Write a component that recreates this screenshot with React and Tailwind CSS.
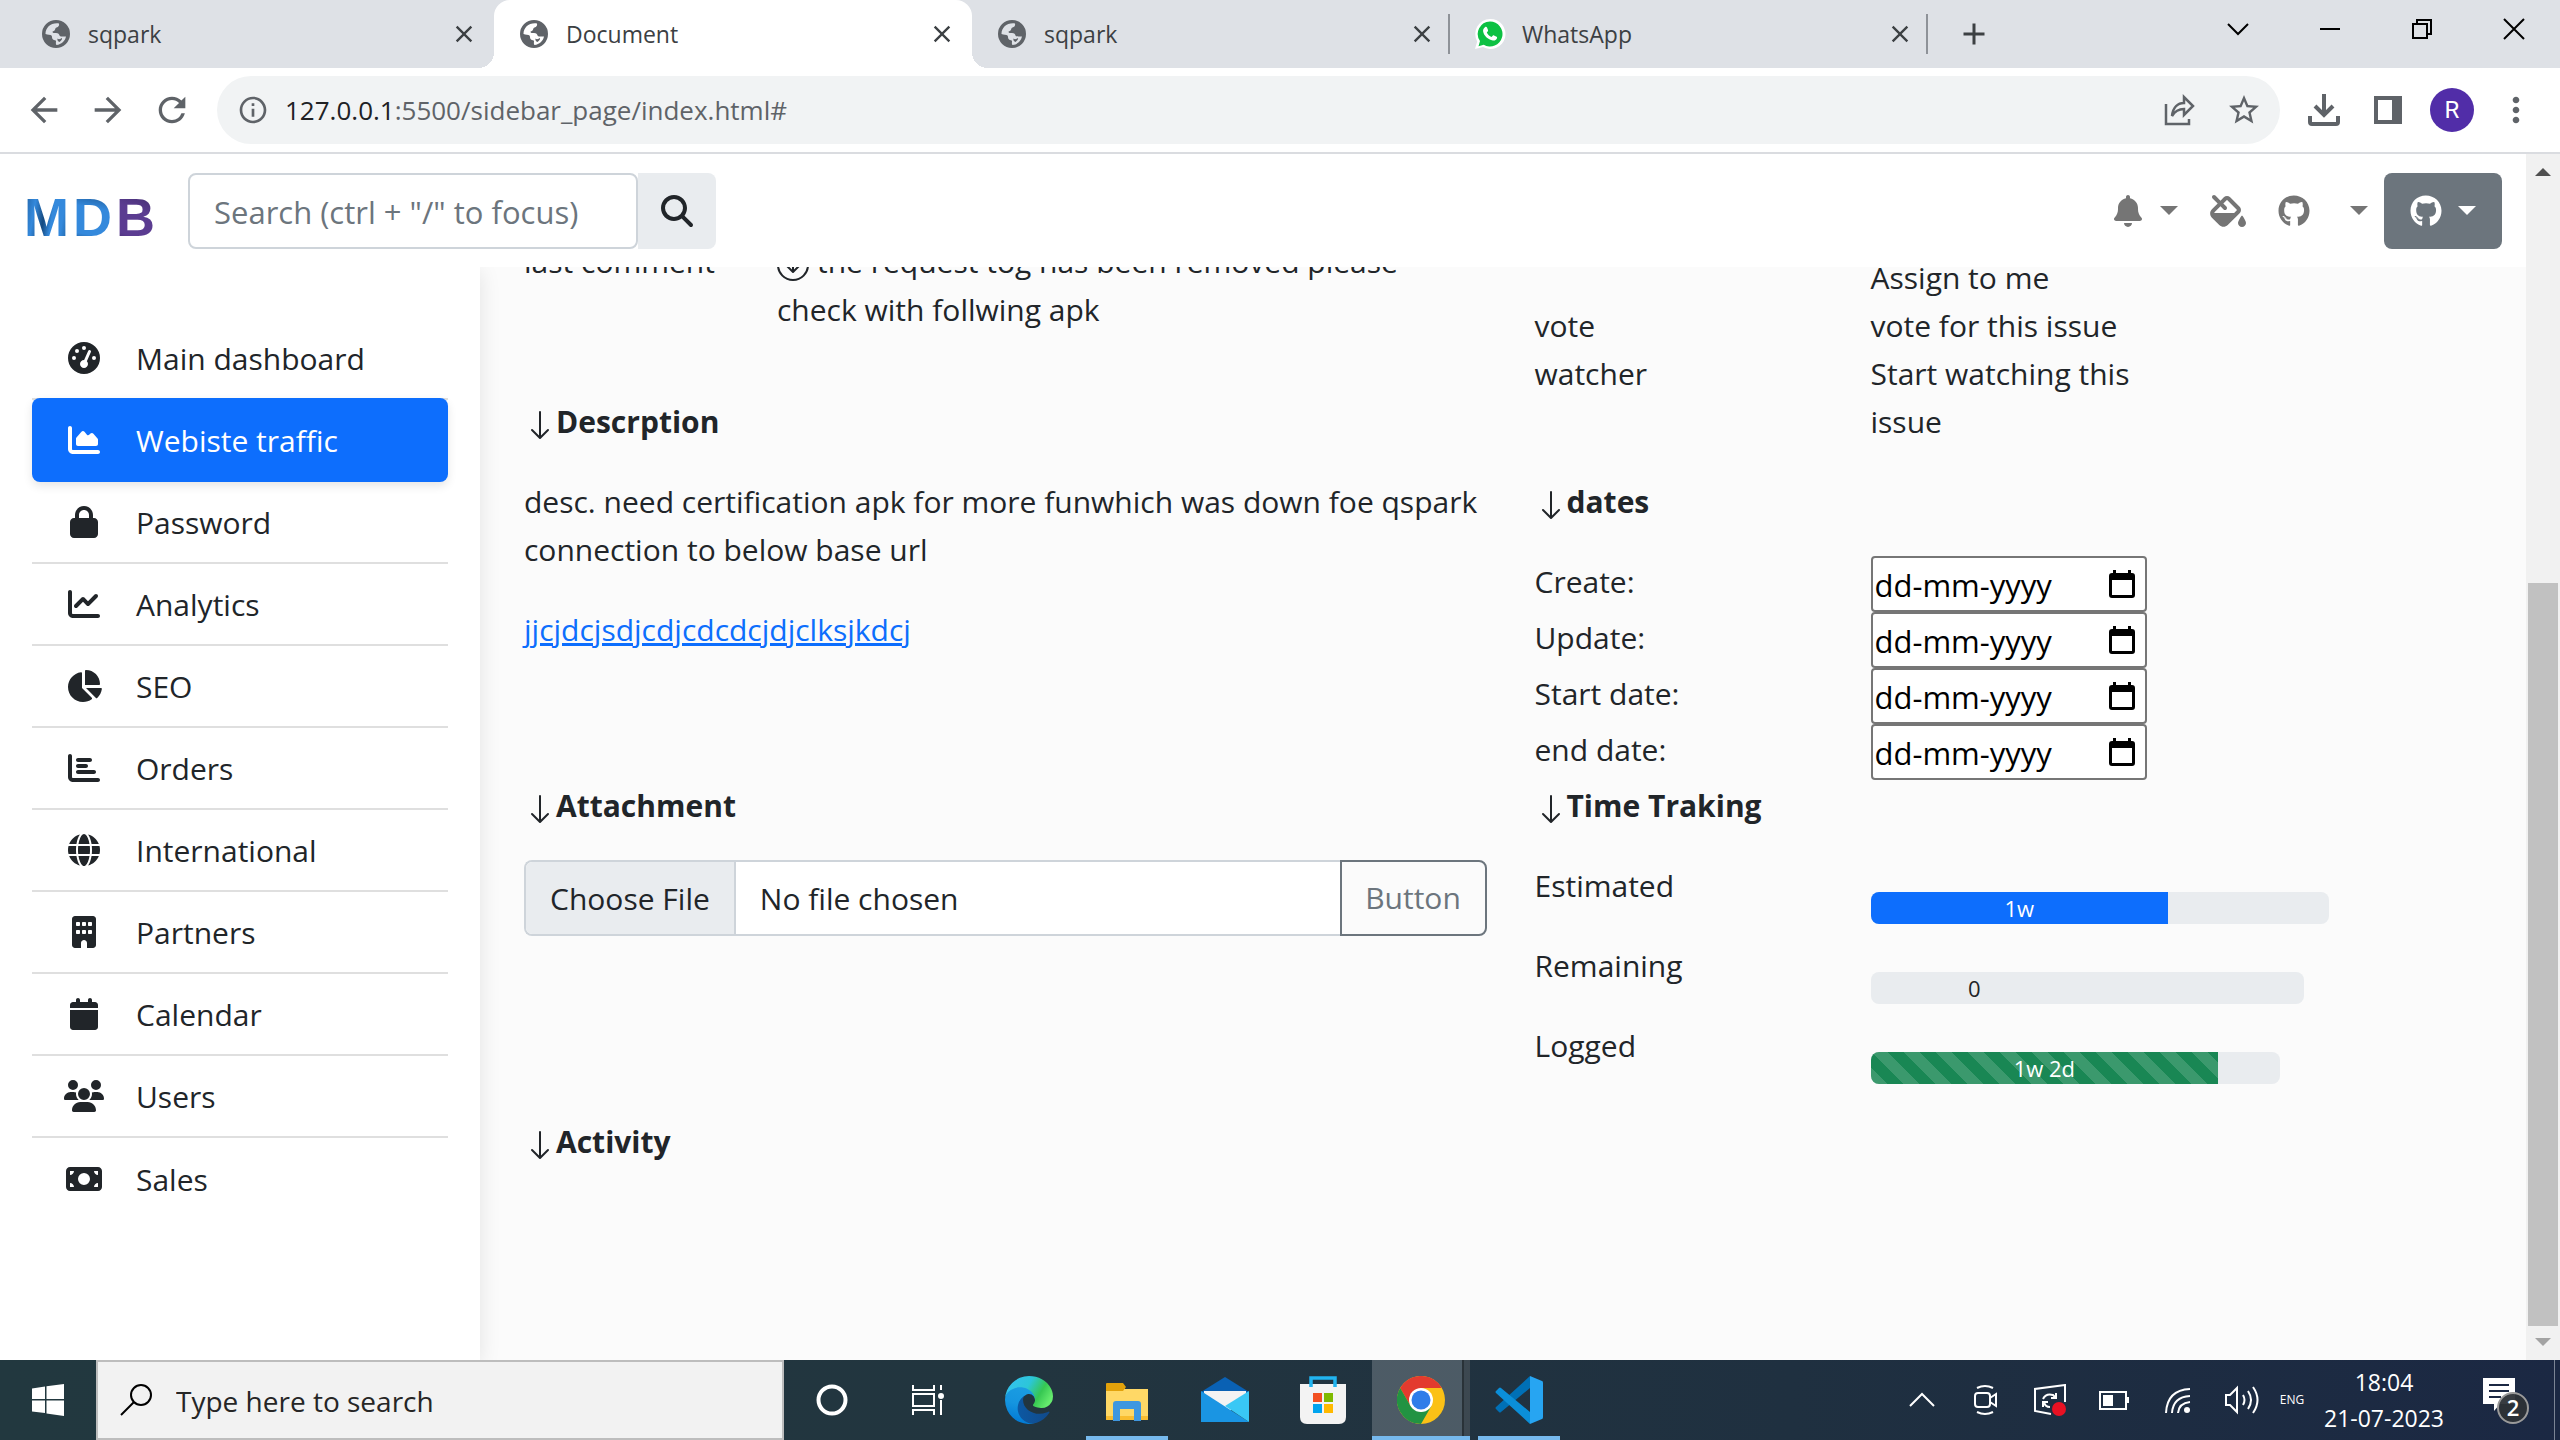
import React from "react";
import {
  FaGaugeHigh, FaChartArea, FaLock, FaChartLine, FaChartPie, FaChartBar, FaGlobe,
  FaBuilding, FaCalendar, FaUsers, FaMoneyBill, FaMagnifyingGlass, FaBell, FaFillDrip, FaGithub,
} from "react-icons/fa6";
import { MdClose, MdAdd, MdArrowBack, MdArrowForward, MdRefresh, MdInfoOutline, MdStarBorder, MdMoreVert } from "react-icons/md";
import { BsArrowDown, BsArrowDownCircle } from "react-icons/bs";

const Caret = () => (
  <svg className="h-[9px] w-[18px]" viewBox="0 0 18 9" fill="currentColor"><path d="M0 0h18L9 9z" /></svg>
);

const Globe = () => (
  <svg className="size-7" viewBox="0 0 28 28" fill="#5f6368">
    <path
      fillRule="evenodd"
      d="M14 0a14 14 0 1 0 0 28 14 14 0 0 0 0-28zM17 3.500c.5 2-.5 3.500-2.500 4-1.500.5-1 2-2 3-.8.700-2 .5-2 1.500s1.500 1 3.500 1c2.500 0 3 1 3.500 2.500.3 1 2 1 4 1h2.500c-1 4.500-4.500 8-9.500 8.500-1-1-.5-2.500-.5-4 0-1-2-.8-3-1.500-1.500-1-.5-3-1.500-4-1-.9-4-.5-6-1.500C3.500 7.500 9 2.500 17 3.500zM15.500 18.500c1.500 1.500 3.500 0 4.500-.500.5 1-1 3-2.500 4-1.500-.5-2.500-2-2-3.500z"
    />
  </svg>
);

const WhatsApp = () => (
  <svg className="size-8" viewBox="0 0 32 32">
    <path d="M16 1a15 15 0 1 1-7 28L1 31l2.2-7.600A15 15 0 0 1 16 1z" fill="#fff" />
    <path d="M16 3.500a12.500 12.500 0 1 1-6.300 23.300L4.500 28.300l1.500-5.200A12.500 12.500 0 0 1 16 3.500z" fill="#0dc143" />
    <path d="M11 9.200c.8-.6 1.600-.4 2 .4l1 2.400c.2.500 0 1-.3 1.400l-.9 1c1 2 2.600 3.500 4.800 4.600l1.300-1.400c.3-.4.700-.4 1.100-.2l2.600 1.300c.6.3.6 1 .3 1.800-.6 1.500-2.400 2.300-4 2-5-1-9.200-5-9.800-9.300-.2-1.700.6-3.100 1.900-4z" fill="#fff" />
  </svg>
);

const TABS = [
  { title: "sqpark" },
  { title: "Document", active: true },
  { title: "sqpark", divider: true },
  { title: "WhatsApp", divider: true, whatsapp: true },
];

function TabStrip() {
  return (
    <div className="flex h-[68px] shrink-0 items-stretch justify-between bg-[#dee1e6] text-[#3c4043]">
      <div className="flex items-stretch pl-4">
        {TABS.map((t, i) => (
          <div
            key={i}
            className={
              t.active
                ? "relative flex w-[478px] items-center rounded-t-2xl bg-white pr-4 pl-6 before:absolute before:bottom-0 before:-left-4 before:size-4 before:bg-[radial-gradient(circle_at_0_0,transparent_16px,white_16px)] after:absolute after:-right-4 after:bottom-0 after:size-4 after:bg-[radial-gradient(circle_at_100%_0,transparent_16px,white_16px)]"
                : "flex w-[478px] items-center pr-4 pl-6"
            }
          >
            <span className="flex w-8 justify-center">{t.whatsapp ? <WhatsApp /> : <Globe />}</span>
            <span className="ml-4 flex-1 text-[23px] leading-8">{t.title}</span>
            <button aria-label="Close tab"><MdClose className="size-7" /></button>
            {t.divider && <span className="ml-3 -mr-4 h-10 w-0.5 bg-[#8e9298]" />}
          </div>
        ))}
        <button aria-label="New tab" className="ml-7"><MdAdd className="size-9" /></button>
      </div>
      <div className="flex h-[58px] text-black">
        <button aria-label="Search tabs" className="flex w-[92px] items-center justify-center">
          <svg className="size-6" viewBox="0 0 24 24" fill="none" stroke="currentColor" strokeWidth="2"><path d="M2 7l10 10L22 7" /></svg>
        </button>
        <button aria-label="Minimize" className="flex w-[92px] items-center justify-center">
          <svg className="size-6" viewBox="0 0 24 24" stroke="currentColor" strokeWidth="2"><path d="M2 12h20" /></svg>
        </button>
        <button aria-label="Restore" className="flex w-[92px] items-center justify-center">
          <svg className="size-6" viewBox="0 0 24 24" fill="none" stroke="currentColor" strokeWidth="2"><path d="M3 7h14v14H3zM7 7V3h14v14h-4" /></svg>
        </button>
        <button aria-label="Close" className="flex w-[92px] items-center justify-center">
          <svg className="size-6" viewBox="0 0 24 24" stroke="currentColor" strokeWidth="2"><path d="M2 2l20 20M22 2L2 22" /></svg>
        </button>
      </div>
    </div>
  );
}

function Toolbar() {
  return (
    <div className="flex h-[86px] shrink-0 items-center border-b-2 border-[#dadce0] bg-white pr-6 pl-6 text-[#5f6368]">
      <div className="flex w-[193px] gap-6">
        <button aria-label="Back"><MdArrowBack className="size-10" /></button>
        <button aria-label="Forward"><MdArrowForward className="size-10" /></button>
        <button aria-label="Reload"><MdRefresh className="size-10" /></button>
      </div>
      <div className="flex h-[68px] flex-1 items-center rounded-full bg-[#f1f3f4] pr-[18px] pl-5">
        <MdInfoOutline className="size-8" />
        <a href="#" className="ml-4 flex-1 text-[26px] leading-10">
          <span className="text-[#202124]">127.0.0.1</span>:5500/sidebar_page/index.html#
        </a>
        <button aria-label="Share" className="mr-7">
          <svg className="size-9" viewBox="0 0 36 36" fill="none" stroke="currentColor" strokeWidth="2.500">
            <path d="M4 12v20h23v-5" /><path d="M10 24c1-9 6-13 12-13V5l9 9-9 9v-6c-5 0-9 2-12 7z" />
          </svg>
        </button>
        <button aria-label="Bookmark"><MdStarBorder className="size-9" /></button>
      </div>
      <div className="flex items-center pl-[26px]">
        <button aria-label="Downloads">
          <svg className="size-9" viewBox="0 0 36 36" fill="none" stroke="currentColor" strokeWidth="4">
            <path d="M18 2v20M9 14l9 9 9-9M4 24v6q0 2 2 2h24q2 0 2-2v-6" />
          </svg>
        </button>
        <button aria-label="Side panel" className="ml-7">
          <svg className="size-9" viewBox="0 0 36 36" fill="currentColor"><path fillRule="evenodd" d="M4 4h28v28H4zM8 8v20h14V8z" /></svg>
        </button>
        <button className="ml-6 size-11 rounded-full bg-[#512da8] font-[Roboto] text-2xl leading-10 text-white">R</button>
        <button aria-label="Menu" className="ml-[22px]"><MdMoreVert className="size-10" /></button>
      </div>
    </div>
  );
}

function PageHeader() {
  return (
    <header className="z-20 flex h-[113px] shrink-0 items-center justify-between bg-white pr-6 pl-6">
      <div className="flex items-center">
        <a href="#" className="flex w-[164px] gap-1 pt-3 font-['Liberation_Sans',sans-serif] text-[54px] leading-none font-bold">
          <span className="bg-[linear-gradient(100deg,#1f5f9f_0%,#3489dc_25%,#154a80_45%,#3489dc_60%,#3489dc_80%,#1c5a96_100%)] bg-clip-text text-transparent">M</span>
          <span className="bg-[linear-gradient(190deg,#164a80_0%,#3489dc_35%,#3489dc_80%,#143c6b_100%)] bg-clip-text text-transparent">D</span>
          <span className="bg-[linear-gradient(200deg,#3d2a66_0%,#5b3c91_40%,#5b3c91_80%,#3a2660_100%)] bg-clip-text text-transparent">B</span>
        </a>
        <form className="flex h-[76px]">
          <input
            type="search"
            aria-label="Search"
            placeholder={'Search (ctrl + "/" to focus)'}
            className="w-[450px] rounded-lg border-2 border-[#ced4da] bg-white px-6 pt-0.5 text-[31px] placeholder:text-[#6c757d]"
          />
          <button type="button" aria-label="Search" className="flex w-[78px] items-center justify-center rounded-r-lg bg-[#e9ecef] text-[#212529]">
            <FaMagnifyingGlass className="size-8" />
          </button>
        </form>
      </div>
      <nav className="flex items-center text-[#757575]">
        <a href="#" aria-label="Notifications" className="flex items-center gap-[18px]"><FaBell className="h-8 w-7" /><Caret /></a>
        <a href="#" aria-label="Theme" className="ml-8"><FaFillDrip className="h-8 w-9" /></a>
        <a href="#" aria-label="GitHub" className="ml-8"><FaGithub className="size-8" /></a>
        <a href="#" aria-label="Language" className="ml-10"><Caret /></a>
        <button aria-label="Account" className="ml-4 flex h-[76px] w-[118px] items-center justify-center gap-4 rounded-lg bg-[#6c757d] text-white">
          <FaGithub className="size-8" /><Caret />
        </button>
      </nav>
    </header>
  );
}

const NAV = [
  ["Main dashboard", FaGaugeHigh, "size-8"],
  ["Webiste traffic", FaChartArea, "size-8"],
  ["Password", FaLock, "size-8"],
  ["Analytics", FaChartLine, "size-8"],
  ["SEO", FaChartPie, "h-8 w-9"],
  ["Orders", FaChartBar, "size-8"],
  ["International", FaGlobe, "size-8"],
  ["Partners", FaBuilding, "size-8"],
  ["Calendar", FaCalendar, "size-8"],
  ["Users", FaUsers, "h-8 w-10"],
  ["Sales", FaMoneyBill, "h-8 w-9"],
];

function Sidebar() {
  return (
    <aside className="z-10 w-[480px] shrink-0 bg-white px-8 pt-[51px] shadow-[0_4px_20px_rgba(0,0,0,0.1)]">
      <nav>
        {NAV.map(([label, Icon, size], i) => (
          <a
            key={label}
            href="#"
            className={
              i === 1
                ? "-mt-0.5 flex h-[84px] items-center rounded-lg bg-[#0d6efd] pl-8 text-white shadow-[0_4px_10px_rgba(0,0,0,0.1)]"
                : i === NAV.length - 1
                  ? "flex h-[82px] items-center pl-8"
                  : "flex h-[82px] items-center border-b-2 border-[#dfdfdf] pl-8"
            }
          >
            <span className="flex w-10 justify-center"><Icon className={size} /></span>
            <span className="ml-8 pt-0.5">{label}</span>
          </a>
        ))}
      </nav>
    </aside>
  );
}

const SectionTitle = ({ children }) => (
  <h2 className="flex items-center font-bold"><BsArrowDown className="mt-1.5 size-8" />{children}</h2>
);

const DATES = [["create", "Create:"], ["update", "Update:"], ["start", "Start date:"], ["end", "end date:"]];

const BARS = [
  { label: "Estimated", track: "w-[458px]", fill: "w-[65%] bg-[#0d6efd] text-white", text: "1w" },
  { label: "Remaining", track: "w-[433px]", fill: "w-[48%]", text: "0" },
  {
    label: "Logged",
    track: "w-[409px]",
    fill: "w-[85%] bg-[#198754] bg-[linear-gradient(45deg,rgba(255,255,255,0.15)_25%,transparent_25%,transparent_50%,rgba(255,255,255,0.15)_50%,rgba(255,255,255,0.15)_75%,transparent_75%,transparent)] bg-[length:32px_32px] text-white",
    text: "1w 2d",
  },
];

function Issue() {
  return (
    <main className="min-w-0 flex-1 overflow-hidden bg-[#fbfbfb]">
      <div className="-mt-[29px] grid grid-cols-[962fr_943fr] gap-x-12 pr-12 pl-11">
        <section>
          <div className="grid grid-cols-[253px_1fr]">
            <div>last comment</div>
            <div>
              <BsArrowDownCircle className="mr-2 inline-block size-8" />the request tog has been removed please<br />check with follwing apk
            </div>
          </div>
          <div className="mt-16"><SectionTitle>Descrption</SectionTitle></div>
          <p className="mt-8">desc. need certification apk for more funwhich was down foe qspark connection to below base url</p>
          <a href="#" className="mt-8 block text-[#0d6efd] underline">jjcjdcjsdjcdjcdcdcjdjclksjkdcj</a>
          <div className="mt-32"><SectionTitle>Attachment</SectionTitle></div>
          <div className="mt-[30px] flex h-[76px]">
            <input
              type="file"
              aria-label="Attachment"
              className="min-w-0 flex-1 rounded-l-lg border-2 border-r-0 border-[#ced4da] bg-white leading-[74px] file:mr-6 file:h-[72px] file:border-0 file:border-r-2 file:border-solid file:border-[#ced4da] file:bg-[#e9ecef] file:px-6 file:text-[#212529]"
            />
            <button className="w-[147px] rounded-r-lg border-2 border-[#6c757d] text-[#6c757d]">Button</button>
          </div>
          <div className="mt-[182px]"><SectionTitle>Activity</SectionTitle></div>
        </section>
        <section className="pt-4">
          <dl className="grid grid-cols-[336px_288px]">
            <dt /><dd>Assign to me</dd>
            <dt>vote</dt><dd>vote for this issue</dd>
            <dt>watcher</dt><dd>Start watching this issue</dd>
          </dl>
          <div className="mt-8"><SectionTitle>dates</SectionTitle></div>
          <div className="mt-[30px]">
            {DATES.map(([id, label]) => (
              <div key={id} className="grid h-14 grid-cols-[336px_276px]">
                <label htmlFor={id} className="pt-0.5">{label}</label>
                <div className="flex items-center rounded-sm border-2 border-[#767676] bg-white pr-2.5 pl-0.5 text-black">
                  <input id={id} placeholder="dd-mm-yyyy" className="h-[52px] min-w-0 flex-1 pt-0.5 text-[31px] outline-none placeholder:text-black" />
                  <svg className="h-7 w-[26px]" viewBox="0 0 26 28">
                    <path d="M4 0h3v3h12V0h3v3h1q3 0 3 3v19q0 3-3 3H3q-3 0-3-3V6q0-3 3-3h1zM3 10v15h20V10z" fillRule="evenodd" />
                  </svg>
                </div>
              </div>
            ))}
          </div>
          <div className="mt-0.5"><SectionTitle>Time Traking</SectionTitle></div>
          <div className="mt-8 flex flex-col gap-8">
            {BARS.map((b) => (
              <div key={b.label} className="grid h-12 grid-cols-[336px_1fr]">
                <div>{b.label}</div>
                <div className="pt-[30px]">
                  <div className={"h-8 overflow-hidden rounded-lg bg-[#e9ecef] " + b.track}>
                    <div className={"h-8 text-center text-[22px] leading-8 " + b.fill}>{b.text}</div>
                  </div>
                </div>
              </div>
            ))}
          </div>
        </section>
      </div>
    </main>
  );
}

function Scrollbar() {
  return (
    <div className="flex w-[34px] shrink-0 flex-col items-center bg-[#f1f1f1]">
      <svg className="h-[34px] w-4" viewBox="0 0 16 34" fill="#505050"><path d="M0 22h16L8 14z" /></svg>
      <div className="flex-[395]" />
      <div className="w-[30px] flex-[743] bg-[#c1c1c1]" />
      <svg className="h-[34px] w-4" viewBox="0 0 16 34" fill="#a3a3a3"><path d="M0 12h16l-8 8z" /></svg>
    </div>
  );
}

const Edge = () => (
  <svg className="size-12" viewBox="0 0 256 256">
    <defs>
      <linearGradient id="e1" x1="0" y1="0" x2="1" y2="0"><stop offset="0" stopColor="#0c59a4" /><stop offset="1" stopColor="#114a8b" /></linearGradient>
      <linearGradient id="e2" x1="0.6" y1="0" x2="0.4" y2="1"><stop offset="0" stopColor="#1b9de2" /><stop offset="0.5" stopColor="#1595df" /><stop offset="1" stopColor="#0078d4" /></linearGradient>
      <linearGradient id="e3" x1="0" y1="0.2" x2="1" y2="0.6"><stop offset="0" stopColor="#35c1f1" /><stop offset="0.45" stopColor="#2cc6d8" /><stop offset="0.75" stopColor="#36c752" /><stop offset="1" stopColor="#66eb6e" /></linearGradient>
    </defs>
    <path fill="url(#e1)" d="M231 190.500c-3.400 1.800-6.900 3.400-10.500 4.700a101.900 101.900 0 0 1-35.900 6.500c-47.300 0-88.500-32.500-88.500-74.300a31.500 31.500 0 0 1 16.400-27.300c-42.800 1.800-53.800 46.400-53.800 72.500 0 73.900 68.100 81.400 82.800 81.400 7.900 0 19.800-2.300 27-4.600l1.300-.4a128.300 128.300 0 0 0 66.600-52.800 4 4 0 0 0-5.400-5.700z" />
    <path fill="url(#e2)" d="M105.700 241.400a79.200 79.200 0 0 1-22.700-21.300 80.700 80.700 0 0 1 29.500-120c3.200-1.500 8.500-4.100 15.600-4a32.400 32.400 0 0 1 25.700 13 31.900 31.900 0 0 1 6.300 18.700c0-.2 24.500-79.600-80-79.600-43.900 0-80 41.700-80 78.200a130.200 130.200 0 0 0 12.100 56 128 128 0 0 0 156.400 67 75.500 75.500 0 0 1-62.800-8z" />
    <path fill="url(#e3)" d="M152.300 148.900c-.9 1-3.400 2.500-3.400 5.600 0 2.600 1.700 5.200 4.800 7.300 14.300 10 41.400 8.600 41.500 8.600a59.600 59.600 0 0 0 30.300-8.300 61.400 61.400 0 0 0 30.400-52.900c.3-22.400-8-37.300-11.300-43.900C223.500 23.900 177.700 0 128 0A128 128 0 0 0 0 126.200c.5-36.500 36.800-66 80-66 3.500 0 23.500.3 42 10.100 16.300 8.600 24.900 18.900 30.800 29.200 6.200 10.700 7.300 24.100 7.300 29.500 0 5.300-2.700 13.300-7.800 19.900z" />
  </svg>
);

const Explorer = () => (
  <svg className="size-12" viewBox="0 0 48 48">
    <path d="M3 8h15l4 5h23v30q0 1-1 1H4q-1 0-1-1z" fill="#ffd866" />
    <path d="M3 15V8q0-1 1-1h16l3 4-3 4z" fill="#e2a20b" />
    <path d="M3 40h42v3q0 1-1 1H4q-1 0-1-1z" fill="#f9bd30" />
    <path d="M10 45V28q0-3 3-3h22q3 0 3 3v17h-7V33H17v12z" fill="#3f97e0" />
  </svg>
);

const Mail = () => (
  <svg className="size-12" viewBox="0 0 48 48">
    <path d="M0 16L24 1l24 15v6H0z" fill="#0a61b4" />
    <path d="M3 15h42v10L24 38 3 25z" fill="#f3f3f3" />
    <path d="M0 15l48 31H0z" fill="#1a95e3" />
    <path d="M24 30L48 15v31z" fill="#39c8f5" />
  </svg>
);

const Store = () => (
  <svg className="size-12" viewBox="0 0 48 48">
    <path d="M1 8h46v33q0 7-7 7H8q-7 0-7-7z" fill="#f3f3f3" />
    <path d="M12 11V2h24v9" fill="none" stroke="#21b4f0" strokeWidth="3.500" />
    <path d="M14 17h9v9h-9z" fill="#f25022" /><path d="M25 17h9v9h-9z" fill="#7fba00" />
    <path d="M14 28h9v9h-9z" fill="#00a4ef" /><path d="M25 28h9v9h-9z" fill="#ffb900" />
  </svg>
);

const Chrome = () => (
  <svg className="size-12" viewBox="0 0 48 48">
    <circle cx="24" cy="24" r="24" fill="#fbc116" />
    <path d="M3.200 12A24 24 0 0 1 44.800 12H24L13.600 30z" fill="#e33b2e" />
    <path d="M3.200 12A24 24 0 0 0 24 48l10.400-18L24 36 13.600 30z" fill="#229342" />
    <circle cx="24" cy="24" r="12" fill="#fff" /><circle cx="24" cy="24" r="9.500" fill="#2f7de9" />
  </svg>
);

const VSCode = () => (
  <svg className="size-12" viewBox="0 0 48 48">
    <path d="M1 31l34-31v12L6 36q-1 1-2 0l-3-3q-1-1 0-2z" fill="#0070b6" />
    <path d="M1 17l34 31V36L6 12q-1-1-2 0l-3 3q-1 1 0 2z" fill="#0b8fd9" />
    <path d="M35 0l12 5q1 0 1 2v34q0 2-1 2l-12 5z" fill="#27a5f2" />
  </svg>
);

const APPS = [
  ["Edge", Edge, ""],
  ["File Explorer", Explorer, "open"],
  ["Mail", Mail, ""],
  ["Store", Store, ""],
  ["Chrome", Chrome, "active"],
  ["Code", VSCode, "open"],
];

function Taskbar() {
  return (
    <footer className="flex h-20 shrink-0 items-stretch justify-between bg-[linear-gradient(90deg,#22383f_0%,#22353f_40%,#1f3040_70%,#1b2843_100%)] text-white">
      <div className="flex items-stretch">
        <button aria-label="Start" className="flex w-24 items-center justify-center">
          <svg className="size-8" viewBox="0 0 32 32" fill="#fff"><path d="M0 4.500l13-2V15H0zM14.500 2.200L32 0v15H14.500zM0 16.500h13V29L0 27.500zM14.500 16.500H32V32l-17.500-2.400z" /></svg>
        </button>
        <label className="flex w-[688px] items-center border-2 border-[#bdbdbd] bg-[#f2f2f2] pl-[22px] text-black">
          <svg className="size-8" viewBox="0 0 32 32" fill="none" stroke="currentColor" strokeWidth="2"><circle cx="21" cy="11" r="10" /><path d="M14 18L1 31" /></svg>
          <input aria-label="Type here to search" placeholder="Type here to search" className="ml-6 min-w-0 flex-1 pt-0.5 text-[28px] outline-none placeholder:text-[#262626]" />
        </label>
        <div className="mr-1 flex items-stretch">
          <button aria-label="Cortana" className="flex w-24 items-center justify-center">
            <svg className="size-8" viewBox="0 0 32 32" fill="none" stroke="#fff" strokeWidth="4"><circle cx="16" cy="16" r="13.500" /></svg>
          </button>
          <button aria-label="Task view" className="flex w-24 items-center justify-center">
            <svg className="size-8" viewBox="0 0 32 32" fill="none" stroke="#fff" strokeWidth="2">
              <path d="M1 1v5h21V1M1 31v-5h21v5M1 10h21v12H1zM29 1v5M29 16v15" /><circle cx="29" cy="12" r="2" fill="#fff" />
            </svg>
          </button>
        </div>
        {APPS.map(([name, Icon, state]) => (
          <button
            key={name}
            aria-label={name}
            className={state === "active" ? "relative flex w-[98px] items-center justify-center bg-white/20" : "relative flex w-[98px] items-center justify-center"}
          >
            <Icon />
            {state === "active" && <span className="absolute inset-y-0 right-0 w-2 border-l-2 border-black/30 bg-black/20" />}
            {state === "active" && <span className="absolute inset-x-0 bottom-0 h-1 bg-[#76b9ed]" />}
            {state === "open" && <span className="absolute inset-x-2 bottom-0 h-1 bg-[#76b9ed]" />}
          </button>
        ))}
      </div>
      <div className="flex items-center">
        <button aria-label="Show hidden icons" className="flex w-16 justify-center">
          <svg className="size-7" viewBox="0 0 28 28" fill="none" stroke="#fff" strokeWidth="2"><path d="M2 20L14 8l12 12" /></svg>
        </button>
        <button aria-label="Meet now" className="flex w-16 justify-center">
          <svg className="size-8" viewBox="0 0 32 32" fill="none" stroke="#fff" strokeWidth="2"><rect x="5" y="9" width="15" height="14" rx="3" /><path d="M20 14l6-4v12l-6-4M7 4q8-4 16 0M7 28q8 4 16 0" /></svg>
        </button>
        <button aria-label="Updates" className="flex w-16 justify-center">
          <svg className="size-8" viewBox="0 0 32 32" fill="none" stroke="#fff" strokeWidth="2">
            <path d="M31 18V1L1 5v22l16 3M9 15q3-6 10-4l3 3m0-5v5h-5M16 23q-5 0-6-5m-1 5v-5h5" /><circle cx="25" cy="25" r="7" fill="#e81123" stroke="none" />
          </svg>
        </button>
        <button aria-label="Battery" className="flex w-16 justify-center">
          <svg className="size-8" viewBox="0 0 32 32" fill="none" stroke="#fff" strokeWidth="2"><path d="M2 8h26v17H2z" /><path d="M5 11h10v11H5zM29 13h2v6h-2z" fill="#fff" stroke="none" /></svg>
        </button>
        <button aria-label="Wi-Fi" className="flex w-16 justify-center">
          <svg className="size-7" viewBox="0 0 28 28" fill="none" stroke="#fff" strokeWidth="2"><path d="M2 27Q3 4 26 3M8 27Q9 11 26 10M14 27Q15 17 26 16" /><circle cx="23" cy="24" r="3" fill="#fff" stroke="none" /></svg>
        </button>
        <button aria-label="Volume" className="flex w-16 justify-center">
          <svg className="size-9" viewBox="0 0 36 36" fill="none" stroke="#fff" strokeWidth="2"><path d="M2 13h4l7-7v24l-7-7H2zM19 13q3 5 0 10M24 9q6 9 0 18M29 5q9 13 0 26" /></svg>
        </button>
        <span className="w-9 text-center text-xs">ENG</span>
        <div className="w-[148px] text-center text-[23px] leading-9"><div>18:04</div><div>21-07-2023</div></div>
        <button aria-label="Notifications" className="flex w-24 justify-center">
          <svg className="size-12" viewBox="0 0 48 48">
            <path d="M1 2h32v26H18l-6 7v-7H1z" fill="#fff" />
            <path d="M7 9h20M7 15h20M7 21h12" stroke="#1b2843" strokeWidth="2" />
            <circle cx="31" cy="32" r="15" fill="#2d3137" fillOpacity="0.95" stroke="#9a9a9a" strokeWidth="2" />
            <text x="31" y="40" fill="#fff" fontSize="22" fontWeight="600" textAnchor="middle">2</text>
          </svg>
        </button>
        <span className="h-20 w-1.5 border-l border-[#7b8494]" />
      </div>
    </footer>
  );
}

export default function App() {
  return (
    <div className="flex h-screen flex-col overflow-hidden bg-white font-['Open_Sans','Noto_Sans',sans-serif]">
      <TabStrip />
      <Toolbar />
      <div className="flex min-h-0 flex-1">
        <div className="flex min-w-0 flex-1 flex-col overflow-hidden text-[30px] leading-[48px] text-[#212529]">
          <PageHeader />
          <div className="flex min-h-0 flex-1">
            <Sidebar />
            <Issue />
          </div>
        </div>
        <Scrollbar />
      </div>
      <Taskbar />
    </div>
  );
}
